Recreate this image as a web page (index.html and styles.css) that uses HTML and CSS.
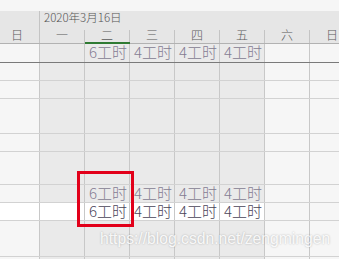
FILE: index.html
```html
<!DOCTYPE html>
<html>
<head>
<meta charset="utf-8">
<link rel="stylesheet" href="styles.css">
</head>
<body>
<div class="screen">
  <div class="head">
    <div class="groups">
      <div class="group prev"></div>
      <div class="group cur">2020年3月16日</div>
    </div>
    <div class="days">
      <div class="day">日</div>
      <div class="day">一</div>
      <div class="day today">二</div>
      <div class="day">三</div>
      <div class="day">四</div>
      <div class="day">五</div>
      <div class="day">六</div>
      <div class="day">日</div>
    </div>
  </div>
  <div class="sheet">
    <div class="row r1 first">
      <div class="cell we"></div><div class="cell wd"></div><div class="cell wd t-grey">6工时</div><div class="cell wd t-grey">4工时</div><div class="cell wd t-grey">4工时</div><div class="cell wd t-grey">4工时</div><div class="cell we"></div><div class="cell we"></div>
    </div>
    <div class="row h18">
      <div class="cell we"></div><div class="cell wd"></div><div class="cell wd"></div><div class="cell wd"></div><div class="cell wd"></div><div class="cell wd"></div><div class="cell we"></div><div class="cell we"></div>
    </div>
    <div class="row h18">
      <div class="cell we"></div><div class="cell wd"></div><div class="cell wd"></div><div class="cell wd"></div><div class="cell wd"></div><div class="cell wd"></div><div class="cell we"></div><div class="cell we"></div>
    </div>
    <div class="row h35">
      <div class="cell we"></div><div class="cell wd"></div><div class="cell wd"></div><div class="cell wd"></div><div class="cell wd"></div><div class="cell wd"></div><div class="cell we"></div><div class="cell we"></div>
    </div>
    <div class="row h18">
      <div class="cell we"></div><div class="cell wd"></div><div class="cell wd"></div><div class="cell wd"></div><div class="cell wd"></div><div class="cell wd"></div><div class="cell we"></div><div class="cell we"></div>
    </div>
    <div class="row h33">
      <div class="cell we"></div><div class="cell wd"></div><div class="cell wd"></div><div class="cell wd"></div><div class="cell wd"></div><div class="cell wd"></div><div class="cell we"></div><div class="cell we"></div>
    </div>
    <div class="row h18">
      <div class="cell we"></div><div class="cell wd"></div><div class="cell wd t-grey">6工时</div><div class="cell wd t-grey">4工时</div><div class="cell wd t-grey">4工时</div><div class="cell wd t-grey">4工时</div><div class="cell we"></div><div class="cell we"></div>
    </div>
    <div class="row h18">
      <div class="cell wh"></div><div class="cell wh"></div><div class="cell wh t-dark">6工时</div><div class="cell wh t-dark">4工时</div><div class="cell wh t-dark">4工时</div><div class="cell wh t-dark">4工时</div><div class="cell we"></div><div class="cell we"></div>
    </div>
    <div class="row h36">
      <div class="cell we"></div><div class="cell wd"></div><div class="cell wd"></div><div class="cell wd"></div><div class="cell wd"></div><div class="cell wd"></div><div class="cell we"></div><div class="cell we"></div>
    </div>
    <div class="row h18">
      <div class="cell we"></div><div class="cell wd"></div><div class="cell wd"></div><div class="cell wd"></div><div class="cell wd"></div><div class="cell wd"></div><div class="cell we"></div><div class="cell we"></div>
    </div>
  </div>
  <div class="mark-box"></div>
  <div class="watermark">https://blog.csdn.net/zengmingen</div>
</div>
</body>
</html>
```

FILE: styles.css
```css
* { box-sizing: border-box; }
html, body { margin: 0; padding: 0; background: #f6f6f6; }
.screen {
  position: relative;
  width: 339px;
  height: 259px;
  overflow: hidden;
  font-family: "Noto Sans CJK SC", "Liberation Sans", sans-serif;
}
.head {
  margin-left: -5px;
  width: 360px;
  background: #e6e6e6;
  border-bottom: 1px solid #b2b2b2;
}
.groups {
  display: flex;
  margin-top: 11px;
  height: 19px;
}
.group {
  height: 19px;
  font-size: 11.5px;
  line-height: 12px;
  color: #555;
  font-weight: 300;
}
.group.prev { width: 45px; border-right: 1px solid #c4c4c4; }
.group.cur { width: 315px; padding-left: 4px; }
.days {
  display: grid;
  grid-template-columns: repeat(8, 45px);
  height: 13px;
}
.day {
  position: relative;
  border-right: 1px solid #c4c4c4;
  text-align: center;
  font-size: 12px;
  line-height: 10px;
  color: #5a5a5a;
  font-weight: 300;
}
.day.today::after {
  content: "";
  position: absolute;
  left: 0;
  right: -1px;
  bottom: -1px;
  height: 2px;
  background: #2f7a33;
}
.sheet {
  margin-left: -5px;
  width: 360px;
}
.row {
  display: grid;
  grid-template-columns: repeat(8, 45px);
  border-bottom: 1px solid #d2d2d2;
}
.row.first { height: 19px; border-bottom: 1px solid #7a7a7a; }
.row.h18 { height: 18px; }
.row.h33 { height: 33px; }
.row.h35 { height: 35px; }
.row.h36 { height: 36px; }
.cell {
  border-right: 1px solid #c8c8c8;
  padding-left: 4px;
  font-size: 15px;
  line-height: 16px;
  font-weight: 300;
  white-space: nowrap;
}
.cell.wd { background: #eaeaea; }
.cell.we { background: #f6f6f6; }
.cell.wh { background: #ffffff; }
.t-grey { color: #857c92; }
.t-dark { color: #4a4458; }
.mark-box {
  position: absolute;
  left: 77px;
  top: 171px;
  width: 57px;
  height: 56px;
  border: 3px solid #e2001a;
}
.watermark {
  position: absolute;
  left: 100px;
  top: 231px;
  font-family: "Liberation Sans", Arial, sans-serif;
  font-size: 15.7px;
  line-height: 16px;
  color: rgba(255, 255, 255, 0.9);
  text-shadow: 0 0 2px rgba(0, 0, 0, 0.28);
  white-space: nowrap;
}
```
